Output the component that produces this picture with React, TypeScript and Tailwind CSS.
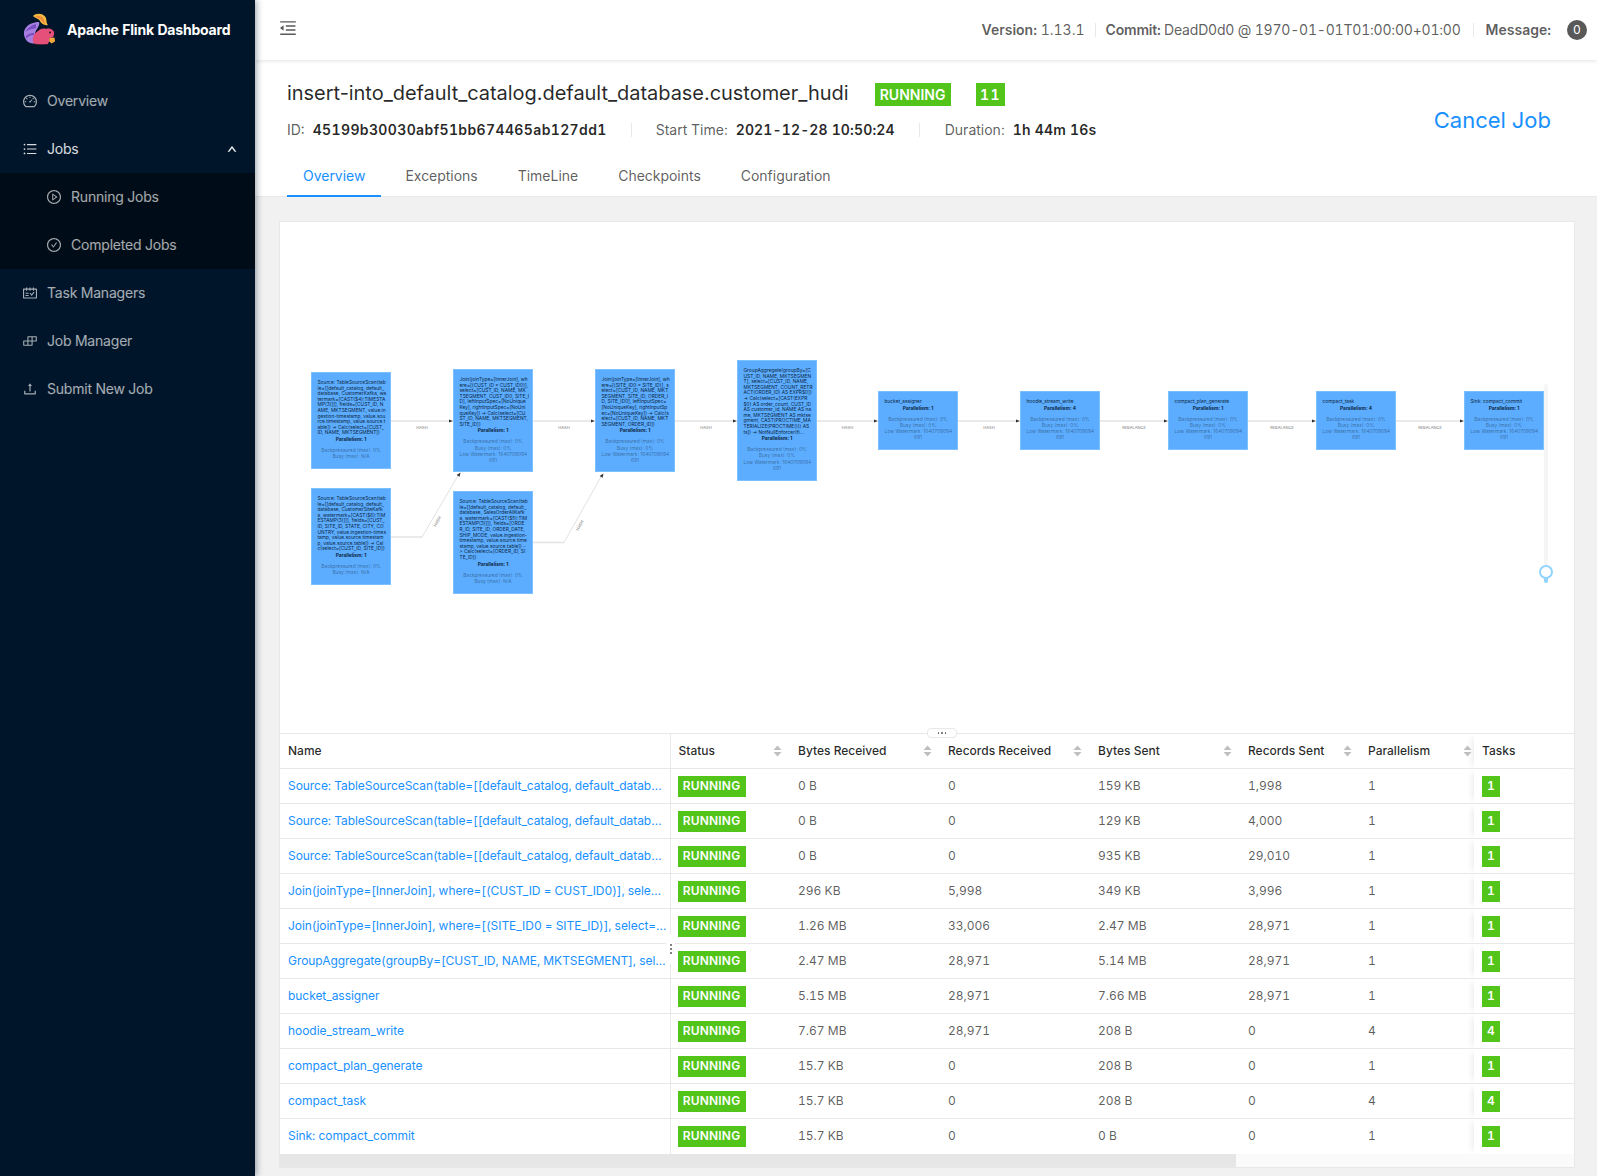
import {
  AiOutlineBars,
  AiOutlineBuild,
  AiOutlineCheckCircle,
  AiOutlineDashboard,
  AiOutlineMenuFold,
  AiOutlinePlayCircle,
  AiOutlineSchedule,
  AiOutlineUp,
  AiOutlineUpload,
} from "react-icons/ai";

type GraphNode = {
  x: number;
  y: number;
  h: number;
  lines: string[];
  parallelism: number;
  metrics: string[];
};

const WATERMARK = ["Backpressured (max): 0%", "Busy (max): 0%", "Low Watermark: 1640709094", "691"];
const NO_WATERMARK = ["Backpressured (max): 0%", "Busy (max): N/A"];

const nodes: GraphNode[] = [
  {
    x: 311, y: 372, h: 97, parallelism: 1, metrics: NO_WATERMARK,
    lines: [
      "Source: TableSourceScan(tab", "le=[[default_catalog, default_", "database, CustomerKafka, wa",
      "termark=[CAST($4):TIMESTA", "MP(3)]]], fields=[CUST_ID, N", "AME, MKTSEGMENT, value.in",
      "gestion-timestamp, value.sou", "rce.timestamp, value.source.t", "able]) -> Calc(select=[CUST_",
      "ID, NAME, MKTSEGMENT])",
    ],
  },
  {
    x: 311, y: 488, h: 97, parallelism: 1, metrics: NO_WATERMARK,
    lines: [
      "Source: TableSourceScan(tab", "le=[[default_catalog, default_", "database, CustomerSiteKafk",
      "a, watermark=[CAST($6):TIM", "ESTAMP(3)]]], fields=[CUST_", "ID, SITE_ID, STATE, CITY, CO",
      "UNTRY, value.ingestion-times", "tamp, value.source.timestam", "p, value.source.table]) -> Cal",
      "c(select=[CUST_ID, SITE_ID])",
    ],
  },
  {
    x: 453, y: 369, h: 103, parallelism: 1, metrics: WATERMARK,
    lines: [
      "Join(joinType=[InnerJoin], wh", "ere=[(CUST_ID = CUST_ID0)],", "select=[CUST_ID, NAME, MK",
      "TSEGMENT, CUST_ID0, SITE_I", "D], leftInputSpec=[NoUnique", "Key], rightInputSpec=[NoUni",
      "queKey]) -> Calc(select=[CU", "ST_ID, NAME, MKTSEGMENT,", "SITE_ID])",
    ],
  },
  {
    x: 453, y: 491, h: 103, parallelism: 1, metrics: NO_WATERMARK,
    lines: [
      "Source: TableSourceScan(tab", "le=[[default_catalog, default_", "database, SalesOrderAllKafk",
      "a, watermark=[CAST($5):TIM", "ESTAMP(3)]]], fields=[ORDE", "R_ID, SITE_ID, ORDER_DATE,",
      "SHIP_MODE, value.ingestion-", "timestamp, value.source.time", "stamp, value.source.table]) -",
      "> Calc(select=[ORDER_ID, SI", "TE_ID])",
    ],
  },
  {
    x: 595, y: 369, h: 103, parallelism: 1, metrics: WATERMARK,
    lines: [
      "Join(joinType=[InnerJoin], wh", "ere=[(SITE_ID0 = SITE_ID)], s", "elect=[CUST_ID, NAME, MKT",
      "SEGMENT, SITE_ID, ORDER_I", "D, SITE_ID0], leftInputSpec=", "[NoUniqueKey], rightInputSp",
      "ec=[NoUniqueKey]) -> Calc(s", "elect=[CUST_ID, NAME, MKT", "SEGMENT, ORDER_ID])",
    ],
  },
  {
    x: 737, y: 360, h: 121, parallelism: 1, metrics: WATERMARK,
    lines: [
      "GroupAggregate(groupBy=[C", "UST_ID, NAME, MKTSEGMEN", "T], select=[CUST_ID, NAME,",
      "MKTSEGMENT, COUNT_RETR", "ACT(ORDER_ID) AS EXPR$0])", "-> Calc(select=[CAST(EXPR",
      "$0) AS order_count, CUST_ID", "AS customer_id, NAME AS na", "me, MKTSEGMENT AS mktse",
      "gment, CAST(PROCTIME_MA", "TERIALIZE(PROCTIME())) AS", "ts]) -> NotNullEnforcer(fi...",
    ],
  },
  { x: 878, y: 391, h: 59, parallelism: 1, metrics: WATERMARK, lines: ["bucket_assigner"] },
  { x: 1020, y: 391, h: 59, parallelism: 4, metrics: WATERMARK, lines: ["hoodie_stream_write"] },
  { x: 1168, y: 391, h: 59, parallelism: 1, metrics: WATERMARK, lines: ["compact_plan_generate"] },
  { x: 1316, y: 391, h: 59, parallelism: 4, metrics: WATERMARK, lines: ["compact_task"] },
  { x: 1464, y: 391, h: 59, parallelism: 1, metrics: WATERMARK, lines: ["Sink: compact_commit"] },
];

const straightEdges = [
  { from: 391, to: 453, label: "HASH" },
  { from: 533, to: 595, label: "HASH" },
  { from: 675, to: 737, label: "HASH" },
  { from: 817, to: 878, label: "HASH" },
  { from: 958, to: 1020, label: "HASH" },
  { from: 1100, to: 1168, label: "REBALANCE" },
  { from: 1248, to: 1316, label: "REBALANCE" },
  { from: 1396, to: 1464, label: "REBALANCE" },
];

const rows = [
  ["Source: TableSourceScan(table=[[default_catalog, default_datab…", "0 B", "0", "159 KB", "1,998", "1", "1"],
  ["Source: TableSourceScan(table=[[default_catalog, default_datab…", "0 B", "0", "129 KB", "4,000", "1", "1"],
  ["Source: TableSourceScan(table=[[default_catalog, default_datab…", "0 B", "0", "935 KB", "29,010", "1", "1"],
  ["Join(joinType=[InnerJoin], where=[(CUST_ID = CUST_ID0)], sele…", "296 KB", "5,998", "349 KB", "3,996", "1", "1"],
  ["Join(joinType=[InnerJoin], where=[(SITE_ID0 = SITE_ID)], select=…", "1.26 MB", "33,006", "2.47 MB", "28,971", "1", "1"],
  ["GroupAggregate(groupBy=[CUST_ID, NAME, MKTSEGMENT], sel…", "2.47 MB", "28,971", "5.14 MB", "28,971", "1", "1"],
  ["bucket_assigner", "5.15 MB", "28,971", "7.66 MB", "28,971", "1", "1"],
  ["hoodie_stream_write", "7.67 MB", "28,971", "208 B", "0", "4", "4"],
  ["compact_plan_generate", "15.7 KB", "0", "208 B", "0", "1", "1"],
  ["compact_task", "15.7 KB", "0", "208 B", "0", "4", "4"],
  ["Sink: compact_commit", "15.7 KB", "0", "0 B", "0", "1", "1"],
];

const tabs = ["Overview", "Exceptions", "TimeLine", "Checkpoints", "Configuration"];

function FlinkLogo() {
  return (
    <svg viewBox="0 0 32 32" className="h-8 w-8 shrink-0">
      <path d="M16 9 C11 9 4 11 1.5 17 C0 21 1.5 27 6 29.5 C9 31 12 30.5 14 30 C11 26 11 20 14 16 C15.5 14 17 11 16 9 Z" fill="#a67fe0" />
      <path d="M13 11 C9 12 4 15 2.5 19 C6 16 10 16 13 15 Z M3 23 C6 20 9 20 11 20 L11 22 C8 22 5 23 3 26 Z" fill="#7b4fc4" />
      <path d="M10 3 C13 -0.5 20 0 22.5 4 C24 7 23 10 25 12 C21 13 18 10 17 8 C15 5 12 5 10 3 Z" fill="#f5b93f" />
      <path d="M12 3.5 C15 2 19 3 20.5 6 C21 8 21.5 9.5 22.5 11 C19.5 10 18.5 7 16.5 5.5 C15 4.5 13.5 4.5 12 3.5 Z" fill="#f08a3c" />
      <path d="M11 31 C8 26 11 20 15 18 C18 15.5 21 15 23 16 C25 15 28 15.5 30 17.5 C31.5 19 31.5 22 30 24 C28.5 25 27 25 26.5 25 C27 27 26 30 24 31.5 C19 32 14 32 11 31 Z" fill="#e5507a" />
      <path d="M26.5 25 L31.5 24.5 L32 28.5 L28.5 30.5 L26 28 Z" fill="#f2a93b" />
      <circle cx="27" cy="19.5" r="0.9" fill="#1a0b14" />
      <path d="M11 31 C15 32 20 32 24 31.5" stroke="#14101c" strokeWidth="0.8" fill="none" />
    </svg>
  );
}

function SortCaret() {
  return (
    <svg viewBox="0 0 9 12" className="h-3 w-[9px] shrink-0 fill-[#bfbfbf]">
      <path d="M0.5 5 L4.5 0.5 L8.5 5 Z" />
      <path d="M0.5 7 L4.5 11.5 L8.5 7 Z" />
    </svg>
  );
}

function MenuItem({ icon, label, active }: { icon: React.ReactNode; label: string; active?: boolean }) {
  return (
    <div className={`flex h-12 items-center pl-[23px] pr-[18px] text-sm tracking-[-0.2px] ${active ? "text-white/85" : "text-white/65"}`}>
      <span className="-ml-px mr-[9px] text-[16px]">{icon}</span>
      <span>{label}</span>
      {active && <AiOutlineUp className="ml-auto h-[10px] w-[10px] stroke-white stroke-[70px] text-white" />}
    </div>
  );
}

function SubMenuItem({ icon, label }: { icon: React.ReactNode; label: string }) {
  return (
    <div className="flex h-12 items-center pl-[47px] text-sm tracking-[-0.2px] text-white/65">
      <span className="-ml-px mr-[9px] text-[16px]">{icon}</span>
      <span>{label}</span>
    </div>
  );
}

function Sidebar() {
  return (
    <aside className="z-20 flex w-[255px] shrink-0 flex-col bg-[#001529] shadow-[2px_0_6px_rgba(0,21,41,0.35)]">
      <div className="flex h-[60px] items-center pb-[2px] pl-[23px]">
        <FlinkLogo />
        <span className="ml-3 text-[14px] font-bold tracking-[-0.2px] whitespace-nowrap text-white">Apache Flink Dashboard</span>
      </div>
      <nav className="mt-[17px]">
        <MenuItem icon={<AiOutlineDashboard />} label="Overview" />
        <MenuItem icon={<AiOutlineBars />} label="Jobs" active />
        <div className="bg-[#000c17]">
          <SubMenuItem icon={<AiOutlinePlayCircle />} label="Running Jobs" />
          <SubMenuItem icon={<AiOutlineCheckCircle />} label="Completed Jobs" />
        </div>
        <MenuItem icon={<AiOutlineSchedule />} label="Task Managers" />
        <MenuItem icon={<AiOutlineBuild />} label="Job Manager" />
        <MenuItem icon={<AiOutlineUpload />} label="Submit New Job" />
      </nav>
    </aside>
  );
}

function TopBar() {
  return (
    <header className="z-10 flex h-[60px] shrink-0 items-center bg-white pl-[23px] text-sm text-black/65 shadow-[0_1px_4px_rgba(0,21,41,0.12)]">
      <AiOutlineMenuFold className="h-5 w-5 -translate-y-[2px] text-[#595959]" />
      <div className="ml-auto flex items-center whitespace-nowrap pb-px">
        <span>
          <b className="font-semibold">Version:</b> 1.13.1
        </span>
        <span className="mx-[10px] h-[14px] w-px bg-[#e8e8e8]" />
        <span className="tracking-[-0.2px]">
          <b className="font-semibold">Commit:</b> DeadD0d0 @ 1970-01-01T01:00:00+01:00
        </span>
        <span className="mx-[12px] h-[14px] w-px bg-[#e8e8e8]" />
        <b className="font-semibold">Message:</b>
        <span className="ml-[16px] mr-[10px] flex h-5 w-5 items-center justify-center rounded-full bg-[#595959] text-xs text-white">
          0
        </span>
      </div>
    </header>
  );
}

function JobHeader() {
  return (
    <section className="relative h-[137px] shrink-0 border-b border-[#e8e8e8] bg-white">
      <div className="flex h-[46px] items-end pl-[32px]">
        <h1 className="mb-px text-[20px] leading-[24px] tracking-[-0.04px] whitespace-nowrap text-black/85 normal-nums">
          insert-into_default_catalog.default_database.customer_hudi
        </h1>
        <span className="ml-[26px] flex h-[23px] w-[76px] items-center justify-center bg-[#52c41a] text-sm font-semibold text-white">
          RUNNING
        </span>
        <span className="ml-[25px] flex h-[23px] w-[29px] items-center justify-center bg-[#52c41a] pl-[1px] text-sm font-semibold tracking-[1.5px] text-white">
          11
        </span>
      </div>
      <div className="mt-[13px] flex h-[22px] items-center pl-[32px] text-sm whitespace-nowrap">
        <span className="text-black/65">ID:</span>
        <b className="ml-[8px] font-semibold tracking-[0.38px] text-black/85">45199b30030abf51bb674465ab127dd1</b>
        <span className="ml-[24px] h-[14px] w-px bg-[#e8e8e8]" />
        <span className="ml-[24px] text-black/65">Start Time:</span>
        <b className="ml-[8px] font-semibold tracking-[0.15px] text-black/85">2021-12-28 10:50:24</b>
        <span className="ml-[24px] h-[14px] w-px bg-[#e8e8e8]" />
        <span className="ml-[25px] text-black/65">Duration:</span>
        <b className="ml-[8px] font-semibold tracking-[0.2px] text-black/85">1h 44m 16s</b>
      </div>
      <a className="absolute right-[46px] top-[42px] text-[22px] leading-[36px] whitespace-nowrap text-[#1890ff]">Cancel Job</a>
      <div className="absolute bottom-[-1px] left-[32px] flex h-[41px] text-sm tracking-[-0.02px] text-black/65">
        {tabs.map((t, i) => (
          <div
            key={t}
            className={`mr-[8px] flex items-center border-b-2 px-4 ${i === 0 ? "border-[#1890ff] text-[#1890ff]" : "border-transparent"}`}
          >
            {t}
          </div>
        ))}
      </div>
    </section>
  );
}

function NodeBox({ node }: { node: GraphNode }) {
  return (
    <div
      className="absolute w-[80px] overflow-hidden border border-[#7cc0ff] bg-[#5cadff] px-[5.5px] pt-[7px] text-[4.85px] leading-[5.6px] text-[#0d2743] normal-nums"
      style={{ left: node.x - 280, top: node.y - 222, height: node.h }}
    >
      {node.lines.map((l) => (
        <div key={l} className="whitespace-nowrap">
          {l}
        </div>
      ))}
      <div className="text-center leading-[7px] font-bold">Parallelism: {node.parallelism}</div>
      <div className="mt-[4px] text-center leading-[6.2px] text-black/40">
        {node.metrics.map((m) => (
          <div key={m} className="whitespace-nowrap">
            {m}
          </div>
        ))}
      </div>
    </div>
  );
}

function EdgeLines() {
  return (
    <svg viewBox="280 222 1294 511" className="absolute inset-0 h-full w-full">
      {straightEdges.map((e) => (
        <g key={e.from}>
          <line x1={e.from} y1={421} x2={e.to - 3} y2={421} stroke="#e3e3e3" strokeWidth={1.5} />
          <path d={`M${e.to - 4} 419.6 L${e.to} 421 L${e.to - 4} 422.4 Z`} fill="#333" />
          <text x={(e.from + e.to) / 2} y={428.5} textAnchor="middle" fontSize={4} fill="#777">
            {e.label}
          </text>
        </g>
      ))}
      <path d="M391 537 H422" fill="none" stroke="#e3e3e3" strokeWidth={1.5} />
      <path d="M422 537 L459 474" fill="none" stroke="#d9d9d9" strokeWidth={0.8} />
      <path d="M460.5 472.5 L459.6 476.8 L456.6 475 Z" fill="#333" />
      <path d="M533 542.5 H564" fill="none" stroke="#e3e3e3" strokeWidth={1.5} />
      <path d="M564 542.5 L602 475" fill="none" stroke="#d9d9d9" strokeWidth={0.8} />
      <path d="M603.5 473.5 L602.6 477.8 L599.6 476 Z" fill="#333" />
      <text x={438.5} y={522} textAnchor="middle" fontSize={4} fill="#777" transform="rotate(-60 438.5 522)">
        HASH
      </text>
      <text x={581} y={526} textAnchor="middle" fontSize={4} fill="#777" transform="rotate(-60 581 526)">
        HASH
      </text>
    </svg>
  );
}

function GraphCanvas() {
  return (
    <div className="relative h-[511px] overflow-hidden">
      <EdgeLines />
      {nodes.map((n) => (
        <NodeBox key={`${n.x}-${n.y}`} node={n} />
      ))}
      {/* zoom slider */}
      <div className="absolute left-[1264px] top-[162px] h-[199px] w-1 rounded-sm bg-[#f5f5f5]">
        <div className="absolute bottom-0 h-[11px] w-1 rounded-sm bg-[#91d5ff]" />
        <div className="absolute bottom-[4px] left-[-5px] h-[14px] w-[14px] rounded-full border-2 border-[#91d5ff] bg-white" />
      </div>
    </div>
  );
}

function Th({ label, caretClass }: { label: string; caretClass?: string }) {
  return (
    <th className="border-b border-[#e8e8e8] p-0 text-left font-medium">
      <div className={`flex h-[34px] items-center justify-between pl-2 ${caretClass ?? "pr-2"}`}>
        <span className="whitespace-nowrap">{label}</span>
        <SortCaret />
      </div>
    </th>
  );
}

function JobTable() {
  return (
    <div className="relative">
      {/* resize handles */}
      <div className="absolute -top-[5px] left-[647px] z-10 flex h-[10px] w-[30px] items-center justify-center gap-[2px] rounded-sm border border-[#e8e8e8] bg-white">
        <span className="h-[1.5px] w-[1.5px] rounded-full bg-[#595959]" />
        <span className="h-[1.5px] w-[1.5px] rounded-full bg-[#595959]" />
        <span className="h-[1.5px] w-[1.5px] rounded-full bg-[#595959]" />
      </div>
      <div className="absolute left-[386px] top-[201px] z-10 flex h-[30px] w-[9px] flex-col items-center justify-center gap-[2px] rounded-sm bg-white">
        <span className="h-[2px] w-[2px] rounded-full bg-[#595959]" />
        <span className="h-[2px] w-[2px] rounded-full bg-[#595959]" />
        <span className="h-[2px] w-[2px] rounded-full bg-[#595959]" />
      </div>
      <table className="w-full table-fixed border-collapse border-t border-[#e8e8e8] text-xs text-black/85">
        <colgroup>
          <col className="w-[390px]" />
          <col className="w-[120px]" />
          <col className="w-[150px]" />
          <col className="w-[150px]" />
          <col className="w-[150px]" />
          <col className="w-[120px]" />
          <col className="w-[114px]" />
          <col />
        </colgroup>
        <thead>
          <tr>
            <th className="border-r border-b border-[#e8e8e8] pl-2 text-left font-medium">Name</th>
            <Th label="Status" />
            <Th label="Bytes Received" />
            <Th label="Records Received" />
            <Th label="Bytes Sent" />
            <Th label="Records Sent" />
            <Th label="Parallelism" caretClass="pr-[2px]" />
            <th className="border-b border-[#e8e8e8] pl-2 text-left font-medium shadow-[-6px_0_6px_-4px_rgba(0,0,0,0.08)]">Tasks</th>
          </tr>
        </thead>
        <tbody className="text-black/65">
          {rows.map((r, i) => (
            <tr key={i} className="h-[35px] border-b border-[#e8e8e8] last:border-b-0">
              <td className="overflow-hidden border-r border-[#e8e8e8] pl-2 tracking-[-0.05px] whitespace-nowrap text-[#1890ff]">{r[0]}</td>
              <td className="px-2">
                <span className="-ml-px flex h-[21px] w-[68px] items-center justify-center bg-[#52c41a] font-semibold tracking-[0.2px] text-white">
                  RUNNING
                </span>
              </td>
              <td className="px-2">{r[1]}</td>
              <td className="px-2">{r[2]}</td>
              <td className="px-2">{r[3]}</td>
              <td className="px-2">{r[4]}</td>
              <td className="px-2">{r[5]}</td>
              <td className="px-2 shadow-[-6px_0_6px_-4px_rgba(0,0,0,0.08)]">
                <span className="flex h-[21px] w-[18px] items-center justify-center bg-[#52c41a] font-semibold text-white">
                  {r[6]}
                </span>
              </td>
            </tr>
          ))}
        </tbody>
      </table>
      {/* horizontal scrollbar */}
      <div className="h-[13px] bg-[#fafafa]">
        <div className="h-full w-[956px] bg-[#e6e6e6]" />
      </div>
    </div>
  );
}

export default function App() {
  return (
    <div className="flex h-[1176px] w-[1597px] overflow-hidden bg-[#f1f1f1] tabular-nums [font-family:Inter,sans-serif]">
      <Sidebar />
      <main className="flex min-w-0 flex-1 flex-col">
        <TopBar />
        <JobHeader />
        <div className="pl-6 pr-[22px] pt-6">
          <div className="border border-[#e8e8e8] bg-white">
            <GraphCanvas />
            <JobTable />
          </div>
        </div>
      </main>
    </div>
  );
}
